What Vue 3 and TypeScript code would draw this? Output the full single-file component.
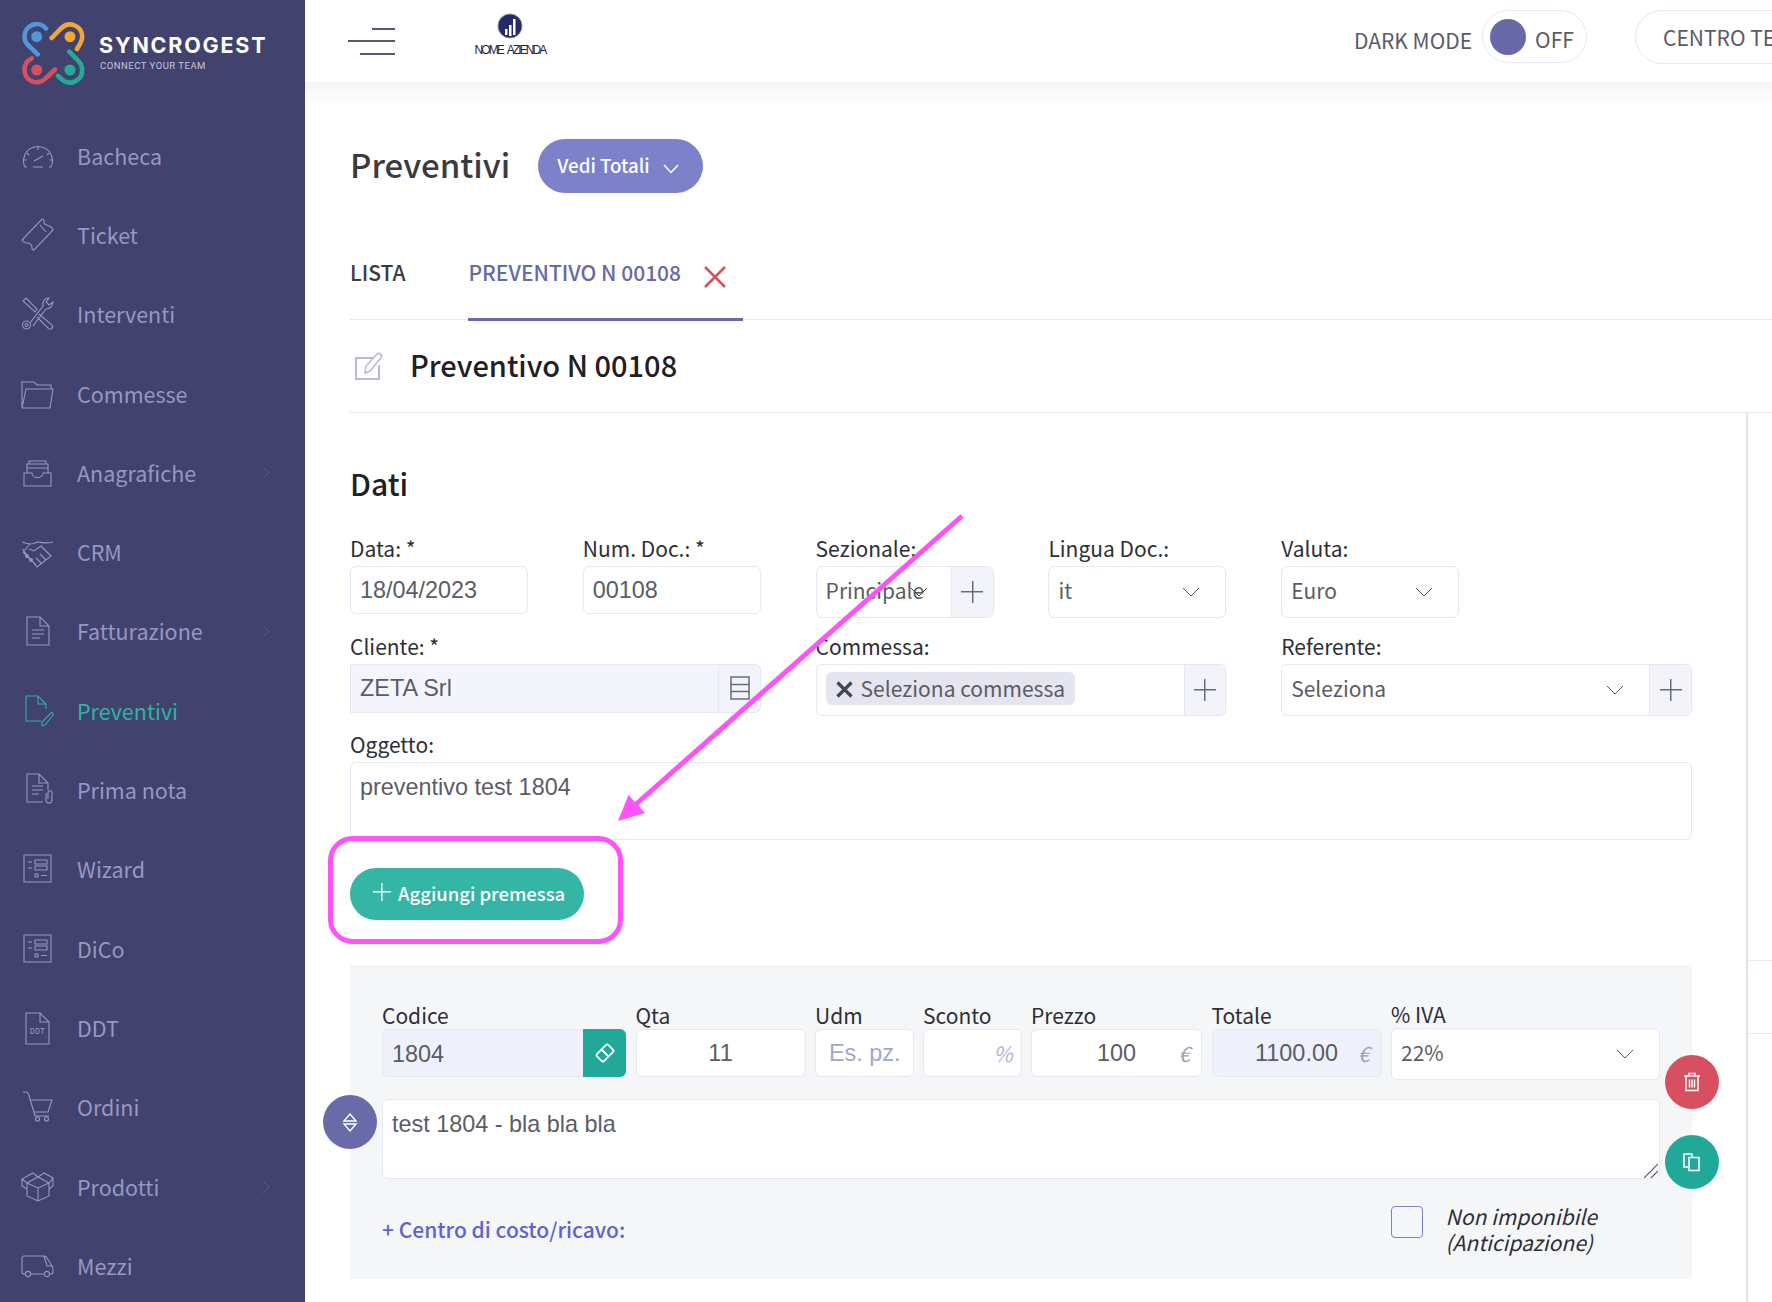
<script setup lang="ts">
interface NavItem {
  label: string
  icon: string
  chevron?: boolean
  active?: boolean
  tag?: string
}

const dot = (x: number, y: number, r: number) =>
  `M${x - r} ${y}a${r} ${r} 0 1 0 ${2 * r} 0a${r} ${r} 0 1 0 ${-2 * r} 0`

const board =
  'M7 7H34V34H7ZM11 14H15M18 12H30V16H18ZM11 20H15M18 18H30V22H18ZM18 26H21V29H18ZM24 27.5H30'

const navItems: NavItem[] = [
  { label: 'Bacheca', icon: 'M10 32H8C5 27 6 12 21 11.5C36 12 37 27 34 32H32M16 32H26M17 26L26 21M21 12V15M10 18L12 20M32 18L30 20M6.5 25H9.5M35.5 25H32.5' },
  { label: 'Ticket', icon: 'M5 26L25 5C26 5 27 6 27 7C27 9 28 11 30 11L34 13C35 14 36 15 36 16L17 36C16 36 15 35 15 34C15 31 13 29 10 29C8 29 5 27 5 26ZM23 11L29 18' },
  { label: 'Interventi', icon: `M13 30L26 13C25 8 28 5 32 5L29 9L32 12L36 9C36 13 33 16 29 16L16 33M6 8L9 5L20 16L18 19ZM22 21L35 32C37 35 33 38 31 35L20 24${dot(9.5, 32, 4)}${dot(9.5, 32, 1.5)}` },
  { label: 'Commesse', icon: 'M5 35V9H17L20 12H34V16M5 35H33L36 16H9L5 35' },
  { label: 'Anagrafiche', icon: 'M7 21V34H34V21H26C26 27 15 27 15 21ZM10 21V12H31V21M12 12V9H29V12M10 16H31', chevron: true },
  { label: 'CRM', icon: `M5 11C10 13 14 14 18 12C22 9 26 14 36 11M13 13L8 19H6L20 36L34 25L24 15L17 20L12 18M6 21L19 34M25 33L19 27M29 29L23 23${dot(10, 25, 1.4)}${dot(14, 29, 1.4)}` },
  { label: 'Fatturazione', icon: 'M10 7H23L32 16V35H10ZM23 7V16H32M15 20H27M15 24H27M15 28H23', chevron: true },
  { label: 'Preventivi', icon: 'M24 31H9V6H21L29 14V19M21 6V14H29M25 36V32L34 23C35.5 22 37 24 36 25L28 35Z', active: true },
  { label: 'Prima nota', icon: 'M26 33H10V5H22L31 14V21M22 5V14H31M15 17H26M15 21H26M15 25H22M29 24V31C29 35 35 35 35 31V24C35 21 31 21 31 24V30' },
  { label: 'Wizard', icon: board },
  { label: 'DiCo', icon: board },
  { label: 'DDT', icon: 'M9 6H23L32 15V37H9ZM23 6V15H32', tag: 'DDT' },
  { label: 'Ordini', icon: `M6 6H9C10 6 11 7 11.5 8L18 30H32M13 14H35L31 26H16.5${dot(20.5, 33, 2)}${dot(29.5, 33, 2)}` },
  { label: 'Prodotti', icon: 'M10 17V30L21 35L32 30V17M10 17L21 22L32 17M21 22V35M10 17L5 13L16 7L21 11L27 7L36 12L32 17L21 11L10 17M5 13L5 20L10 23M36 12V20L32 23', chevron: true },
  { label: 'Mezzi', icon: `M8 29H7C5.5 29 5 28 5 27V14C5 12 6 11 7 11H27C28.5 11 29.5 12 30 13L35 21C36 22 36 24 36 25V27C36 28 35 29 34 29H33M14 29H27M27 11L30 21H35${dot(11, 29, 2.6)}${dot(30, 29, 2.6)}` },
]

const chevron = 'M1 1L9 9L17 1'
</script>

<template>
  <div class="app">
    <aside class="sidebar">
      <div class="brand">
        <svg class="brand-logo" width="64" height="64" viewBox="0 0 64 64" fill="none" stroke-width="4.6" stroke-linecap="round">
          <path d="M24 6.5A12.2 12.2 0 0 0 2.5 14.7C2.5 18 3.5 20.5 5.5 22.5L15.7 32.3" stroke="#4f97d9" />
          <circle cx="14.7" cy="14.7" r="5.5" fill="#4f97d9" />
          <path d="M29.7 16L39.5 6A12.2 12.2 0 0 1 60.2 14.7C60.2 19 58 22 55 27" stroke="#f0a73a" />
          <circle cx="48" cy="14.7" r="5.5" fill="#f0a73a" />
          <path d="M9.7 36.5C5 38.5 2.5 43 2.5 48A12.2 12.2 0 0 0 23.5 56.5L33 47.5" stroke="#d94f5f" />
          <circle cx="14.7" cy="48" r="5.5" fill="#d94f5f" />
          <path d="M47.3 29.7L56.5 39C59 41.5 60.2 44.5 60.2 48A12.2 12.2 0 0 1 40 57.5L36 54" stroke="#22ab96" />
          <circle cx="48" cy="48" r="5.5" fill="#22ab96" />
        </svg>
        <div class="brand-text">
          <div class="brand-name">SYNCROGEST</div>
          <div class="brand-sub">CONNECT YOUR TEAM</div>
        </div>
      </div>
      <nav>
        <a v-for="item in navItems" :key="item.label" class="nav-item" :class="{ active: item.active }">
          <svg class="nav-icon" width="42" height="42" viewBox="0 0 42 42" fill="none" stroke="currentColor" stroke-width="1.1">
            <path :d="item.icon" />
            <text v-if="item.tag" x="20.5" y="27" text-anchor="middle" class="nav-tag">{{ item.tag }}</text>
          </svg>
          <span>{{ item.label }}</span>
          <svg v-if="item.chevron" class="nav-chevron" width="8" height="14" viewBox="0 0 8 14" fill="none" stroke="currentColor">
            <path d="M1 1L7 7L1 13" />
          </svg>
        </a>
      </nav>
    </aside>

    <div class="main">
      <header class="topbar">
        <div class="burger"><i></i><i></i><i></i></div>
        <div class="company">
          <svg width="26" height="26" viewBox="0 0 26 26">
            <circle cx="13" cy="13" r="12" fill="#23296b" stroke="#8a8a96" />
            <path d="M8 16h2.5v6H8zM12 12h2.5v11H12zM16 6h2.5v16H16z" fill="#fff" />
          </svg>
          <span>NOME AZIENDA</span>
        </div>
        <span class="dark-label">DARK MODE</span>
        <div class="toggle"><i></i><span>OFF</span></div>
        <div class="help-pill">CENTRO TECNICO</div>
      </header>

      <section class="content">
        <div class="page-head">
          <h1>Preventivi</h1>
          <button class="totals-btn">
            Vedi Totali
            <svg width="16" height="10" viewBox="0 0 16 10" fill="none" stroke="#fff" stroke-width="1.5"><path d="M1 1L8 8.5L15 1" /></svg>
          </button>
        </div>

        <div class="tabs">
          <div class="tab">LISTA</div>
          <div class="tab active">
            PREVENTIVO N 00108
            <svg class="tab-close" width="24" height="24" viewBox="0 0 24 24" fill="none" stroke="#d84f5f" stroke-width="2.5"><path d="M2 2L22 22M22 2L2 22" /></svg>
          </div>
        </div>

        <div class="doc-title">
          <svg width="30" height="30" viewBox="0 0 30 30" fill="none" stroke="#b9bad3" stroke-width="2">
            <path d="M20 7H2V28H25V14" />
            <path d="M11 22L12 15L23 3C25 1 29 4 27 7L16 20Z" stroke-width="1.5" />
          </svg>
          <h2>Preventivo N 00108</h2>
        </div>

        <div class="doc-body">
          <div class="doc-form">
            <h3>Dati</h3>

            <div class="form-grid">
              <label class="field">
                <span class="lbl">Data: *</span>
                <input class="input" value="18/04/2023" />
              </label>
              <label class="field">
                <span class="lbl">Num. Doc.: *</span>
                <input class="input" value="00108" />
              </label>
              <div class="field">
                <span class="lbl">Sezionale:</span>
                <div class="control">
                  <div class="select-value">Principale</div>
                  <svg class="chev chev-over" width="18" height="10" viewBox="0 0 18 10" fill="none" stroke="#45464f"><path :d="chevron" /></svg>
                  <div class="addon plus"><i></i></div>
                </div>
              </div>
              <div class="field">
                <span class="lbl">Lingua Doc.:</span>
                <div class="control">
                  <div class="select-value">it</div>
                  <svg class="chev" width="18" height="10" viewBox="0 0 18 10" fill="none" stroke="#55565f"><path :d="chevron" /></svg>
                </div>
              </div>
              <div class="field">
                <span class="lbl">Valuta:</span>
                <div class="control">
                  <div class="select-value">Euro</div>
                  <svg class="chev" width="18" height="10" viewBox="0 0 18 10" fill="none" stroke="#55565f"><path :d="chevron" /></svg>
                </div>
              </div>
              <div></div>

              <div class="field span-2">
                <span class="lbl">Cliente: *</span>
                <div class="control tinted short">
                  <div class="select-value arial">ZETA Srl</div>
                  <div class="addon">
                    <svg width="20" height="24" viewBox="0 0 20 24" fill="none" stroke="#6b6c78" stroke-width="1.5"><path d="M1 1H19V23H1ZM1 8.5H19M1 15.5H19" /></svg>
                  </div>
                </div>
              </div>
              <div class="field span-2">
                <span class="lbl">Commessa:</span>
                <div class="control">
                  <div class="select-value">
                    <span class="chip">
                      <svg width="17" height="17" viewBox="0 0 17 17" fill="none" stroke="#45464f" stroke-width="3.2"><path d="M1.5 1.5L15.5 15.5M15.5 1.5L1.5 15.5" /></svg>
                      Seleziona commessa
                    </span>
                  </div>
                  <div class="addon plus"><i></i></div>
                </div>
              </div>
              <div class="field span-2">
                <span class="lbl">Referente:</span>
                <div class="control">
                  <div class="select-value">Seleziona</div>
                  <svg class="chev chev-ref" width="18" height="10" viewBox="0 0 18 10" fill="none" stroke="#55565f"><path :d="chevron" /></svg>
                  <div class="addon plus"><i></i></div>
                </div>
              </div>

              <label class="field span-6">
                <span class="lbl">Oggetto:</span>
                <textarea class="area subject">preventivo test 1804</textarea>
              </label>
            </div>

            <button class="add-btn"><i class="add-plus"></i>Aggiungi premessa</button>

            <div class="line-panel">
              <div class="line-grid">
                <div class="cell">
                  <span class="lbl">Codice</span>
                  <div class="code-box">
                    <input class="input code-input" value="1804" />
                    <div class="code-btn">
                      <svg width="24" height="24" viewBox="0 0 24 24" fill="none" stroke="#fff" stroke-width="1.8">
                        <rect x="4" y="7" width="16" height="10" rx="1.5" transform="rotate(-45 12 12)" />
                        <path d="M8.5 8.5L15.5 15.5" />
                      </svg>
                    </div>
                  </div>
                </div>
                <div class="cell">
                  <span class="lbl">Qta</span>
                  <input class="input center" value="11" />
                </div>
                <div class="cell">
                  <span class="lbl">Udm</span>
                  <input class="input slim" placeholder="Es. pz." />
                </div>
                <div class="cell">
                  <span class="lbl">Sconto</span>
                  <div class="suffix-box"><span class="suffix pale">%</span></div>
                </div>
                <div class="cell">
                  <span class="lbl">Prezzo</span>
                  <div class="suffix-box"><span>100</span><span class="suffix">€</span></div>
                </div>
                <div class="cell">
                  <span class="lbl">Totale</span>
                  <div class="suffix-box readonly"><span>1100.00</span><span class="suffix">€</span></div>
                </div>
                <div class="cell">
                  <span class="lbl lbl-up">% IVA</span>
                  <div class="control">
                    <div class="select-value">22%</div>
                    <svg class="chev" width="18" height="10" viewBox="0 0 18 10" fill="none" stroke="#55565f"><path :d="chevron" /></svg>
                  </div>
                </div>
              </div>

              <div class="description-wrap">
                <textarea class="area description">test 1804 - bla bla bla</textarea>
                <svg class="resizer" width="14" height="14" viewBox="0 0 14 14" fill="none" stroke="#55565f" stroke-width="1.2"><path d="M0 14L14 0M7 14L14 7" /></svg>
              </div>

              <div class="panel-foot">
                <a class="cost-link">+ Centro di costo/ricavo:</a>
                <label class="exempt">
                  <span class="check"></span>
                  <em>Non imponibile<br />(Anticipazione)</em>
                </label>
              </div>

              <button class="round drag">
                <svg width="16" height="19" viewBox="0 0 16 19" fill="none" stroke="#fff" stroke-width="1.4"><path d="M8 1L14 8H2ZM2 11H14L8 18Z" /></svg>
              </button>
              <button class="round del">
                <svg width="18" height="20" viewBox="0 0 18 20" fill="none" stroke="#fff" stroke-width="1.5"><path d="M1 4H17M6 4V1.5H12V4M3 4V18.5H15V4M6.5 7.5V15.5M9 7.5V15.5M11.5 7.5V15.5" /></svg>
              </button>
              <button class="round copy">
                <svg width="20" height="20" viewBox="0 0 20 20" fill="none" stroke="#fff" stroke-width="1.5"><path d="M6 15H2V2H10V5M7 5.5H17V18.5H7Z" /></svg>
              </button>
            </div>
          </div>

          <div class="side-col">
            <div class="side-row"></div>
          </div>
        </div>
      </section>
    </div>

    <svg class="annotation" width="1772" height="1302" viewBox="0 0 1772 1302" fill="none">
      <rect x="330.5" y="838.5" width="290" height="103" rx="22" stroke="#ff52f7" stroke-width="5" />
      <path d="M962 516L634 806" stroke="#ff52f7" stroke-width="5" />
      <path d="M618 821L628.5 795L645 813Z" fill="#ff52f7" />
    </svg>
  </div>
</template>

<style scoped>
.app {
  position: relative;
  display: flex;
  height: 1302px;
  overflow: hidden;
  background: #fff;
  font-family: "Noto Sans CJK SC", "Noto Sans", sans-serif;
  color: #2e2f36;
}

.sidebar {
  flex: 0 0 305px;
  background: #41426e;
}

.brand {
  display: flex;
  align-items: flex-start;
  height: 116px;
  padding: 22px 0 0 22px;
  box-sizing: border-box;
}

.brand-text {
  margin: 10px 0 0 13px;
}

.brand-name {
  font-family: Inter, sans-serif;
  font-weight: 700;
  font-size: 21.5px;
  line-height: 26px;
  letter-spacing: 1.8px;
  color: #fff;
}

.brand-sub {
  font-family: Roboto, sans-serif;
  font-size: 9.5px;
  line-height: 14px;
  letter-spacing: 0.5px;
  color: #c5c6dc;
  margin: 1px 0 0 1px;
}

.nav-item {
  display: flex;
  align-items: center;
  height: 79.3px;
  padding-left: 17px;
  font-size: 21.5px;
  line-height: 30px;
  color: #9798c1;
}

.nav-item.active {
  color: #2eb3a0;
}

.nav-icon {
  flex: none;
  margin-right: 18px;
}

.nav-tag {
  font-family: "Liberation Mono", monospace;
  font-size: 8.5px;
  stroke: none;
  fill: currentColor;
}

.nav-chevron {
  position: absolute;
  left: 262px;
  color: #5b5c84;
}

.main {
  flex: 1;
  min-width: 0;
  overflow: hidden;
}

.topbar {
  position: relative;
  display: flex;
  align-items: center;
  height: 82px;
  padding-left: 43px;
  background: #fff;
  white-space: nowrap;
}

.topbar::after {
  content: "";
  position: absolute;
  left: 0;
  right: 0;
  top: 100%;
  height: 24px;
  background: linear-gradient(#f5f5f5, #fff);
}

.burger {
  display: flex;
  flex-direction: column;
  align-items: flex-end;
  width: 47px;
  gap: 10.5px;
}

.burger i {
  display: block;
  height: 2px;
  background: #55567a;
  width: 23px;
}

.burger i:nth-child(2) {
  width: 47px;
}

.burger i:nth-child(3) {
  width: 35px;
}

.company {
  display: flex;
  flex-direction: column;
  align-items: center;
  width: 68px;
  margin: 0 0 12px 81px;
}

.company span {
  font-family: "Liberation Sans", sans-serif;
  font-size: 12px;
  line-height: 14px;
  letter-spacing: -1.9px;
  word-spacing: 3px;
  color: #23243f;
  margin-top: 4px;
}

.dark-label {
  margin: -3px 0 0 810px;
  font-size: 21px;
  color: #5a5b66;
}

.toggle {
  display: flex;
  align-items: center;
  flex: none;
  box-sizing: border-box;
  width: 105px;
  height: 53px;
  margin: -9px 0 0 10px;
  padding-left: 7px;
  border: 1px solid #e8e8fb;
  border-radius: 27px;
}

.toggle i {
  width: 36px;
  height: 36px;
  border-radius: 50%;
  background: #6769a9;
}

.toggle span {
  margin-left: 9px;
  font-size: 21px;
  color: #5a5b66;
  padding-top: 5px;
}

.help-pill {
  flex: none;
  box-sizing: border-box;
  height: 54px;
  margin: -9px 0 0 48px;
  padding: 0 26px 0 27px;
  border: 1px solid #e6e6f6;
  border-radius: 27px;
  font-size: 21px;
  line-height: 52px;
  color: #5a5b66;
}

.content {
  padding: 57px 0 0 45px;
}

.page-head {
  display: flex;
  align-items: center;
  height: 54px;
}

h1,
h2,
h3 {
  margin: 0;
  font-weight: 500;
}

h1 {
  font-size: 33px;
  line-height: 44px;
  color: #3a3b41;
  margin-top: -4px;
}

.totals-btn {
  display: flex;
  align-items: center;
  gap: 13px;
  flex: none;
  height: 54px;
  width: 165px;
  margin-left: 28px;
  padding: 0 0 4px 19px;
  border: 0;
  border-radius: 27px;
  background: #7d81c9;
  color: #fff;
  font-family: inherit;
  font-size: 18.7px;
  font-weight: 500;
}

.totals-btn svg {
  margin-top: 9px;
}

.tabs {
  display: flex;
  gap: 63px;
  margin-top: 35px;
  height: 91px;
  border-bottom: 1px solid #e6e6f2;
}

.tab {
  position: relative;
  height: 93px;
  box-sizing: border-box;
  padding-top: 31px;
  font-size: 21px;
  line-height: 26px;
  font-weight: 500;
  color: #3a3b41;
  border-bottom: 3px solid transparent;
}

.tab.active {
  width: 275px;
  color: #6769a9;
  border-bottom-color: #6769a9;
}

.tab-close {
  position: absolute;
  left: 235px;
  top: 37px;
}

.doc-title {
  display: flex;
  align-items: center;
  gap: 26px;
  height: 92px;
  padding-left: 4px;
  border-bottom: 1px solid #e6e6f2;
}

h2 {
  font-size: 29px;
  line-height: 40px;
  color: #1f2024;
  margin-top: -4px;
}

.doc-body {
  display: flex;
}

.doc-form {
  flex: 0 0 1396px;
  box-sizing: border-box;
  padding: 50px 54.5px 0 0;
}

.side-col {
  flex: 1;
  border-left: 2px solid #e3e3f0;
  height: 890px;
}

.side-row {
  height: 72px;
  margin-top: 547px;
  border-top: 1px solid #e9e9f2;
  border-bottom: 1px solid #e9e9f2;
}

h3 {
  font-size: 30px;
  line-height: 40px;
  color: #1f2024;
}

.form-grid {
  display: grid;
  grid-template-columns: repeat(6, 178px);
  column-gap: 54.8px;
  row-gap: 16.5px;
  margin-top: 33px;
}

.span-2 {
  grid-column: span 2;
}

.span-6 {
  grid-column: span 6;
}

.field {
  display: flex;
  flex-direction: column;
}

.lbl {
  display: block;
  font-size: 21px;
  line-height: 24px;
  margin-bottom: 6px;
  color: #2e2f36;
}

.input,
.area {
  display: block;
  box-sizing: border-box;
  width: 100%;
  padding: 0 9px;
  border: 1px solid #e6e6f4;
  border-radius: 6px;
  background: #fff;
  outline: none;
  font-family: "Liberation Sans", Arial, sans-serif;
  font-size: 23.4px;
  color: #5b5c66;
}

.input {
  height: 48px;
}

.input::placeholder {
  color: #a3a5cf;
}

.slim {
  padding: 0 0 0 13px;
}

.center {
  text-align: center;
}

.control {
  position: relative;
  display: flex;
  box-sizing: border-box;
  height: 51.5px;
  border: 1px solid #e6e6f4;
  border-radius: 6px;
  background: #fff;
}

.control.short {
  height: 48.5px;
}

.control.tinted {
  background: #f4f5fc;
  border-radius: 0 6px 6px 0;
}

.select-value {
  position: relative;
  flex: 1;
  min-width: 0;
  display: flex;
  align-items: center;
  padding: 0 0 3px 9px;
  font-size: 21px;
  color: #5b5c66;
  white-space: nowrap;
}

.arial {
  font-family: "Liberation Sans", Arial, sans-serif;
  font-size: 23.4px;
  padding-bottom: 0;
}

.addon {
  flex: none;
  position: relative;
  display: flex;
  align-items: center;
  justify-content: center;
  box-sizing: border-box;
  width: 41.5px;
  background: #f3f4f9;
  border-left: 1px solid #e6e6f4;
  border-radius: 0 6px 6px 0;
}

.plus i {
  display: block;
  width: 22px;
  height: 22px;
  background:
    linear-gradient(#6b6c78, #6b6c78) center / 22px 1.5px no-repeat,
    linear-gradient(#6b6c78, #6b6c78) center / 1.5px 22px no-repeat;
}

.chev {
  position: absolute;
  right: 25px;
  top: 20px;
}

.chev-over {
  right: auto;
  left: 93px;
}

.chev-ref {
  right: 67px;
}

.chip {
  display: flex;
  align-items: center;
  gap: 8px;
  height: 33px;
  padding: 0 10px 0 10px;
  border-radius: 6px;
  background: #e4e5ef;
}

.chip svg {
  margin-top: 2px;
}

.area {
  resize: none;
  padding-top: 11px;
  line-height: 26px;
}

.subject {
  height: 78px;
}

.add-btn {
  display: flex;
  align-items: center;
  height: 52px;
  width: 234px;
  margin-top: 28px;
  padding: 0 0 2px 23px;
  border: 0;
  border-radius: 26px;
  background: #35b5a6;
  color: #fff;
  font-family: inherit;
  font-size: 18.5px;
  font-weight: 500;
  white-space: nowrap;
}

.add-plus {
  display: block;
  width: 18px;
  height: 18px;
  margin: -2px 7px 0 0;
  background:
    linear-gradient(#fff, #fff) center / 18px 1.5px no-repeat,
    linear-gradient(#fff, #fff) center / 1.5px 18px no-repeat;
}

.line-panel {
  position: relative;
  box-sizing: border-box;
  height: 314px;
  margin-top: 45px;
  padding: 38px 32px 0;
  background: #f5f6f8;
}

.line-grid {
  display: grid;
  grid-template-columns: 244px 170px 98.5px 98.5px 171px 170px 268.5px;
  column-gap: 9.5px;
  height: 76px;
}

.cell .lbl {
  margin-bottom: 2px;
}

.lbl-up {
  margin-top: -1px;
}

.code-box {
  display: flex;
  height: 48px;
}

.code-input {
  flex: 1;
  min-width: 0;
  background: #eef1f9;
  border-radius: 6px 0 0 6px;
  border-right: 0;
  padding-top: 2px;
}

.code-btn {
  flex: 0 0 43px;
  display: flex;
  align-items: center;
  justify-content: center;
  background: #22a899;
  border-radius: 0 6px 6px 0;
}

.suffix-box {
  position: relative;
  display: flex;
  align-items: center;
  justify-content: center;
  box-sizing: border-box;
  height: 48px;
  border: 1px solid #e6e6f4;
  border-radius: 6px;
  background: #fff;
  font-family: "Liberation Sans", Arial, sans-serif;
  font-size: 23.4px;
  color: #5b5c66;
}

.suffix-box.readonly {
  background: #eef1f9;
}

.suffix {
  position: absolute;
  right: 11px;
  font-family: "Noto Sans CJK SC", sans-serif;
  font-style: italic;
  font-size: 21px;
  color: #a2a3b4;
}

.suffix.pale {
  right: 8px;
  color: #b2b3d2;
}

.description-wrap {
  position: relative;
  margin-top: 20px;
}

.description {
  height: 80px;
}

.resizer {
  position: absolute;
  right: 2px;
  bottom: 1px;
}

.panel-foot {
  display: flex;
  justify-content: space-between;
  align-items: center;
  height: 52px;
  margin-top: 25px;
}

.cost-link {
  font-size: 21px;
  font-weight: 500;
  color: #5f62d0;
  margin-top: -3px;
}

.exempt {
  display: flex;
  align-items: flex-start;
  width: 268.5px;
  gap: 22px;
}

.check {
  flex: none;
  box-sizing: border-box;
  width: 32px;
  height: 32px;
  border: 1px solid #7d81c9;
  border-radius: 4px;
}

.exempt em {
  font-size: 21px;
  line-height: 26px;
  margin-top: -3px;
  color: #2e2f36;
}

.round {
  position: absolute;
  display: flex;
  align-items: center;
  justify-content: center;
  width: 54px;
  height: 54px;
  padding: 0;
  border: 0;
  border-radius: 50%;
}

.drag {
  left: -27px;
  top: 130px;
  background: #696aa8;
}

.del {
  right: -27px;
  top: 90px;
  background: #d84f5f;
}

.copy {
  right: -27px;
  top: 170px;
  background: #22a899;
}

.annotation {
  position: absolute;
  inset: 0;
  pointer-events: none;
}
</style>

<style>
html,
body {
  margin: 0;
  overflow: hidden;
}
</style>
